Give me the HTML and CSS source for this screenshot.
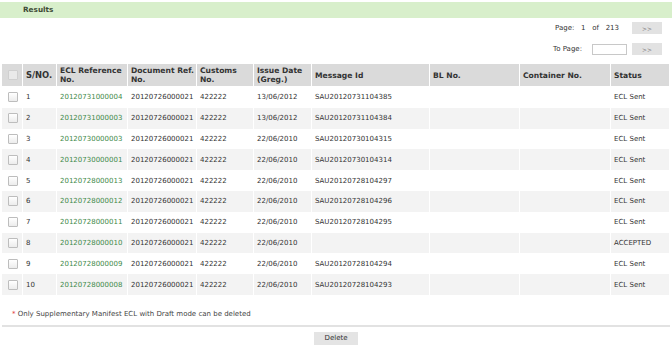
FILE: index.html
```html
<!DOCTYPE html>
<html lang="en">

<head>
    <meta charset="UTF-8">
    <title>ECL Results</title>
    <link rel="stylesheet" href="styles.css">
</head>

<body>
    <div class="results-bar">Results</div>

    <div class="pager">
        <div class="pager-row">
            <span class="page-info">Page:&nbsp;&nbsp; 1&nbsp;&nbsp; of&nbsp;&nbsp; 213</span>
            <button class="nav-btn">&gt;&gt;</button>
        </div>
        <div class="pager-row">
            <span class="page-label">To Page:</span>
            <input type="text" class="page-input">
            <button class="nav-btn">&gt;&gt;</button>
        </div>
    </div>

    <table class="results-table">
        <colgroup>
            <col style="width:20px">
            <col style="width:33px">
            <col style="width:70px">
            <col style="width:68px">
            <col style="width:56px">
            <col style="width:57px">
            <col style="width:117px">
            <col style="width:89px">
            <col style="width:90px">
            <col style="width:58px">
        </colgroup>
        <thead>
            <tr>
                <th class="cb-cell"><span class="cb cb-head"></span></th>
                <th class="sno">S/NO.</th>
                <th>ECL Reference<br>No.</th>
                <th>Document Ref.<br>No.</th>
                <th>Customs<br>No.</th>
                <th>Issue Date<br>(Greg.)</th>
                <th>Message Id</th>
                <th>BL No.</th>
                <th>Container No.</th>
                <th>Status</th>
            </tr>
        </thead>
        <tbody>
            <tr>
                <td class="cb-cell"><span class="cb"></span></td>
                <td>1</td>
                <td class="ref">20120731000004</td>
                <td>20120726000021</td>
                <td>422222</td>
                <td>13/06/2012</td>
                <td>SAU20120731104385</td>
                <td></td>
                <td></td>
                <td>ECL Sent</td>
            </tr>
            <tr>
                <td class="cb-cell"><span class="cb"></span></td>
                <td>2</td>
                <td class="ref">20120731000003</td>
                <td>20120726000021</td>
                <td>422222</td>
                <td>13/06/2012</td>
                <td>SAU20120731104384</td>
                <td></td>
                <td></td>
                <td>ECL Sent</td>
            </tr>
            <tr>
                <td class="cb-cell"><span class="cb"></span></td>
                <td>3</td>
                <td class="ref">20120730000003</td>
                <td>20120726000021</td>
                <td>422222</td>
                <td>22/06/2010</td>
                <td>SAU20120730104315</td>
                <td></td>
                <td></td>
                <td>ECL Sent</td>
            </tr>
            <tr>
                <td class="cb-cell"><span class="cb"></span></td>
                <td>4</td>
                <td class="ref">20120730000001</td>
                <td>20120726000021</td>
                <td>422222</td>
                <td>22/06/2010</td>
                <td>SAU20120730104314</td>
                <td></td>
                <td></td>
                <td>ECL Sent</td>
            </tr>
            <tr>
                <td class="cb-cell"><span class="cb"></span></td>
                <td>5</td>
                <td class="ref">20120728000013</td>
                <td>20120726000021</td>
                <td>422222</td>
                <td>22/06/2010</td>
                <td>SAU20120728104297</td>
                <td></td>
                <td></td>
                <td>ECL Sent</td>
            </tr>
            <tr>
                <td class="cb-cell"><span class="cb"></span></td>
                <td>6</td>
                <td class="ref">20120728000012</td>
                <td>20120726000021</td>
                <td>422222</td>
                <td>22/06/2010</td>
                <td>SAU20120728104296</td>
                <td></td>
                <td></td>
                <td>ECL Sent</td>
            </tr>
            <tr>
                <td class="cb-cell"><span class="cb"></span></td>
                <td>7</td>
                <td class="ref">20120728000011</td>
                <td>20120726000021</td>
                <td>422222</td>
                <td>22/06/2010</td>
                <td>SAU20120728104295</td>
                <td></td>
                <td></td>
                <td>ECL Sent</td>
            </tr>
            <tr>
                <td class="cb-cell"><span class="cb"></span></td>
                <td>8</td>
                <td class="ref">20120728000010</td>
                <td>20120726000021</td>
                <td>422222</td>
                <td>22/06/2010</td>
                <td></td>
                <td></td>
                <td></td>
                <td>ACCEPTED</td>
            </tr>
            <tr>
                <td class="cb-cell"><span class="cb"></span></td>
                <td>9</td>
                <td class="ref">20120728000009</td>
                <td>20120726000021</td>
                <td>422222</td>
                <td>22/06/2010</td>
                <td>SAU20120728104294</td>
                <td></td>
                <td></td>
                <td>ECL Sent</td>
            </tr>
            <tr>
                <td class="cb-cell"><span class="cb"></span></td>
                <td>10</td>
                <td class="ref">20120728000008</td>
                <td>20120726000021</td>
                <td>422222</td>
                <td>22/06/2010</td>
                <td>SAU20120728104293</td>
                <td></td>
                <td></td>
                <td>ECL Sent</td>
            </tr>
        </tbody>
    </table>

    <p class="note"><span class="star">*</span> Only Supplementary Manifest ECL with Draft mode can be deleted</p>

    <div class="actions">
        <button class="delete-btn">Delete</button>
    </div>
</body>

</html>
```

FILE: styles.css
```css
body {
    margin: 0;
    background-color: #fff;
    font-family: "DejaVu Sans", Verdana, sans-serif;
    font-size: 7px;
    color: #333;
}

.results-bar {
    margin-top: 2px;
    height: 16px;
    line-height: 16px;
    padding-left: 23px;
    background-color: #d8efcb;
    color: #3e4a35;
    font-size: 7.3px;
    font-weight: bold;
}

.pager {
    padding: 4px 10px 0 0;
}

.pager-row {
    display: flex;
    justify-content: flex-end;
    align-items: center;
    height: 12px;
    margin-bottom: 9px;
}

.page-info {
    margin-right: 13px;
}

.page-label {
    margin-right: 10px;
}

.nav-btn {
    width: 30px;
    height: 12px;
    padding: 0;
    border: none;
    background-color: #e2e2e2;
    color: #777;
    font-family: inherit;
    font-size: 6px;
}

.page-input {
    width: 33px;
    height: 9px;
    margin-right: 5px;
    padding: 0;
    border: 1px solid #c8c8c8;
    background-color: #fff;
}

.results-table {
    margin: 0 0 0 1px;
    border-collapse: separate;
    border-spacing: 1px 0;
    table-layout: fixed;
    width: 669px;
}

.results-table th {
    height: 22px;
    padding: 0 3px;
    background-color: #dadada;
    text-align: left;
    line-height: 9px;
    font-size: 7.6px;
    font-weight: bold;
    color: #333;
    border-bottom: 1px solid #fff;
    white-space: nowrap;
}

.results-table th.sno {
    font-size: 8.4px;
}

.results-table td {
    height: 20.8px;
    padding: 0 3px;
    white-space: nowrap;
}

.results-table tbody tr:nth-child(even) td {
    background-color: #f3f3f3;
}

.results-table .cb-cell {
    padding: 0 0 0 6px;
}

.cb {
    display: block;
    width: 8px;
    height: 8px;
    border: 1px solid #bdbdbd;
    border-radius: 1px;
    background: linear-gradient(#fff, #ececec);
}

.cb-head {
    border-color: #cfcfcf;
    background: #e9e9e9;
}

.ref {
    color: #3f8a4a;
}

.note {
    margin: 15px 0 0 12px;
    color: #444;
}

.star {
    color: #e03a3a;
}

.actions {
    margin: 7px 2px 0 2px;
    padding-top: 5px;
    border-top: 2px solid #e2e2e2;
    text-align: center;
}

.delete-btn {
    width: 44px;
    height: 13px;
    padding: 0;
    border: none;
    background-color: #e4e4e4;
    color: #333;
    font-family: inherit;
    font-size: 7px;
}
```
